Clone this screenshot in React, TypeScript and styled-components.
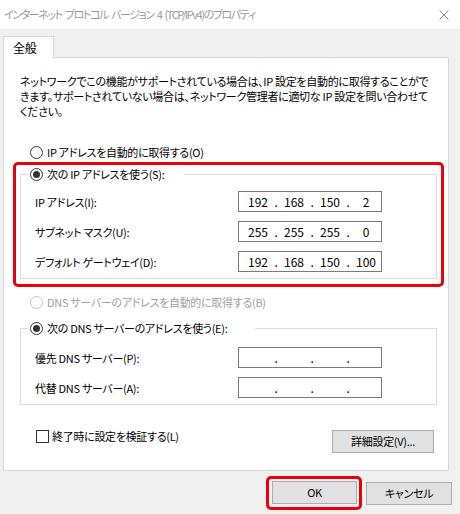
import { createGlobalStyle, styled } from 'styled-components';

// Page reset: the dialog fills the whole 460x514 window
const GlobalStyle = createGlobalStyle`
    html, body {
        margin: 0;
        padding: 0;
    }
    body {
        width: 460px;
        height: 514px;
        overflow: hidden;
        background: #f0f0f0;
        font-family: "Noto Sans CJK JP", "Noto Sans", sans-serif;
        font-size: 11px;
        letter-spacing: -0.3px;
        font-feature-settings: "palt";
        color: #000;
    }
`;

// Title bar (inactive window, so grey text)
const TitleBar = styled.div`
    height: 29px;
    background: #fff;
    display: flex;
    align-items: center;
    justify-content: space-between;
    padding-left: 4px;
`;

const Title = styled.span`
    color: #999;
    line-height: 15px;
    letter-spacing: -1.4px;
    word-spacing: 2px;
    white-space: nowrap;
`;

const CloseButton = styled.div`
    width: 32px;
    height: 29px;
    display: flex;
    align-items: center;
    justify-content: center;
`;

const Body = styled.div`
    padding: 7px 11px 0 3px;
`;

// The single "全般" tab sitting on the panel border
const Tab = styled.div`
    width: 51px;
    height: 22px;
    box-sizing: border-box;
    border: 1px solid #d9d9d9;
    border-bottom: none;
    background: #fff;
    padding-left: 9px;
    font-size: 12px;
    line-height: 22px;
    position: relative;
    z-index: 1;
    margin-bottom: -1px;
`;

const Panel = styled.div`
    height: 414px;
    box-sizing: border-box;
    border: 1px solid #d9d9d9;
    background: #fff;
    padding: 16px 11px 0 16px;
    display: flex;
    flex-direction: column;
`;

const Description = styled.p`
    margin: 0;
    line-height: 15px;
    white-space: nowrap;
`;

const OptionRow = styled.label<{ $disabled?: boolean; $top: number }>`
    display: flex;
    align-items: center;
    gap: 4px;
    height: 15px;
    line-height: 15px;
    margin: ${(p) => p.$top}px 0 0 10px;
    color: ${(p) => (p.$disabled ? '#a0a0a0' : '#000')};
    white-space: nowrap;
`;

const Radio = styled.span<{ $checked?: boolean; $disabled?: boolean }>`
    width: 13px;
    height: 13px;
    box-sizing: border-box;
    border-radius: 50%;
    border: 1px solid ${(p) => (p.$disabled ? '#c4c4c4' : '#333')};
    background: #fff;
    display: flex;
    align-items: center;
    justify-content: center;
    flex: none;

    &::after {
        content: '';
        width: 7px;
        height: 7px;
        border-radius: 50%;
        background: #333;
        display: ${(p) => (p.$checked ? 'block' : 'none')};
    }
`;

// Red annotation frame drawn around a highlighted area
const Highlight = styled.div`
    border: 3px solid #e8000b;
    border-radius: 5px;
    box-sizing: border-box;
`;

const IpHighlight = styled(Highlight)`
    margin: 2px -7px 0 -7px;
    padding: 2px 4px 5px 4px;
`;

const Group = styled.fieldset<{ $top: number }>`
    margin: 0;
    border: 1px solid #dcdcdc;
    padding: ${(p) => p.$top}px 0 6px 14px;
    display: flex;
    flex-direction: column;
    gap: 9px;
`;

// Legend sits 7px left of the fieldset padding; $tail is the extra blank after the text
const Legend = styled.legend<{ $tail: number }>`
    margin-left: -7px;
    padding: 0 ${(p) => p.$tail}px 0 2px;
    display: flex;
    align-items: center;
    gap: 4px;
    line-height: 15px;
    white-space: nowrap;
`;

const FieldRow = styled.div`
    display: grid;
    grid-template-columns: 203px 144px;
    align-items: center;
`;

const IpBox = styled.div`
    height: 21px;
    box-sizing: border-box;
    border: 1px solid #7a7a7a;
    padding-left: 5px;
    display: flex;
    align-items: center;
`;

const Octet = styled.span`
    width: 28px;
    text-align: center;
    line-height: 15px;
    font-size: 12px;
    letter-spacing: 0;
`;

const Dot = styled.span`
    width: 8px;
    text-align: center;
    line-height: 15px;
    font-size: 12px;
`;

const DnsGroup = styled(Group)`
    margin-top: 11px;
`;

const BottomRow = styled.div`
    display: flex;
    justify-content: space-between;
    align-items: flex-start;
    margin: 25px 3px 0 16px;
`;

const CheckLabel = styled.label`
    display: flex;
    align-items: center;
    gap: 3px;
    height: 13px;
    line-height: 15px;
    white-space: nowrap;
`;

const CheckBox = styled.span`
    width: 13px;
    height: 13px;
    box-sizing: border-box;
    border: 1px solid #333;
    background: #fff;
`;

const Button = styled.button<{ $width: number }>`
    width: ${(p) => p.$width}px;
    height: 23px;
    box-sizing: border-box;
    border: 1px solid #adadad;
    background: #e1e1e1;
    font: inherit;
    letter-spacing: inherit;
    font-feature-settings: inherit;
    color: #000;
    padding: 0;
    line-height: 21px;
`;

const Footer = styled.div`
    display: flex;
    justify-content: flex-end;
    align-items: center;
    gap: 4px;
    padding: 5px 8px 0 0;
`;

const OkHighlight = styled(Highlight)`
    padding: 2px 2px 3px 3px;
`;

function IpField({ value }: { value: string[] }) {
    return (
        <IpBox>
            {value.map((part, i) => (
                <>
                    {i > 0 && <Dot>.</Dot>}
                    <Octet>{part}</Octet>
                </>
            ))}
        </IpBox>
    );
}

export default function App() {
    return (
        <>
            <GlobalStyle />
            <TitleBar>
                <Title>インターネット プロトコル バージョン 4 (TCP/IPv4)のプロパティ</Title>
                <CloseButton>
                    <svg width="10" height="10" viewBox="0 0 10 10">
                        <path d="M0.5 0.5L9.5 9.5M9.5 0.5L0.5 9.5" stroke="#888" strokeWidth="1" />
                    </svg>
                </CloseButton>
            </TitleBar>

            <Body>
                <Tab>全般</Tab>
                <Panel>
                    <Description>
                        ネットワークでこの機能がサポートされている場合は、IP 設定を自動的に取得することがで<br />
                        きます。サポートされていない場合は、ネットワーク管理者に適切な IP 設定を問い合わせて<br />
                        ください。
                    </Description>

                    <OptionRow $top={26}>
                        <Radio />
                        IP アドレスを自動的に取得する(O)
                    </OptionRow>

                    {/* IP address settings, highlighted in red */}
                    <IpHighlight>
                        <Group $top={9}>
                            <Legend $tail={20}>
                                <Radio $checked />
                                次の IP アドレスを使う(S):
                            </Legend>
                            <FieldRow>
                                <span>IP アドレス(I):</span>
                                <IpField value={['192', '168', '150', '2']} />
                            </FieldRow>
                            <FieldRow>
                                <span>サブネット マスク(U):</span>
                                <IpField value={['255', '255', '255', '0']} />
                            </FieldRow>
                            <FieldRow>
                                <span>デフォルト ゲートウェイ(D):</span>
                                <IpField value={['192', '168', '150', '100']} />
                            </FieldRow>
                        </Group>
                    </IpHighlight>

                    <OptionRow $top={8} $disabled>
                        <Radio $disabled />
                        DNS サーバーのアドレスを自動的に取得する(B)
                    </OptionRow>

                    {/* DNS server settings */}
                    <DnsGroup $top={11}>
                        <Legend $tail={28}>
                            <Radio $checked />
                            次の DNS サーバーのアドレスを使う(E):
                        </Legend>
                        <FieldRow>
                            <span>優先 DNS サーバー(P):</span>
                            <IpField value={['', '', '', '']} />
                        </FieldRow>
                        <FieldRow>
                            <span>代替 DNS サーバー(A):</span>
                            <IpField value={['', '', '', '']} />
                        </FieldRow>
                    </DnsGroup>

                    <BottomRow>
                        <CheckLabel>
                            <CheckBox />
                            終了時に設定を検証する(L)
                        </CheckLabel>
                        <Button $width={102}>詳細設定(V)...</Button>
                    </BottomRow>
                </Panel>
            </Body>

            <Footer>
                <OkHighlight>
                    <Button $width={85}>OK</Button>
                </OkHighlight>
                <Button $width={86}>キャンセル</Button>
            </Footer>
        </>
    );
}
